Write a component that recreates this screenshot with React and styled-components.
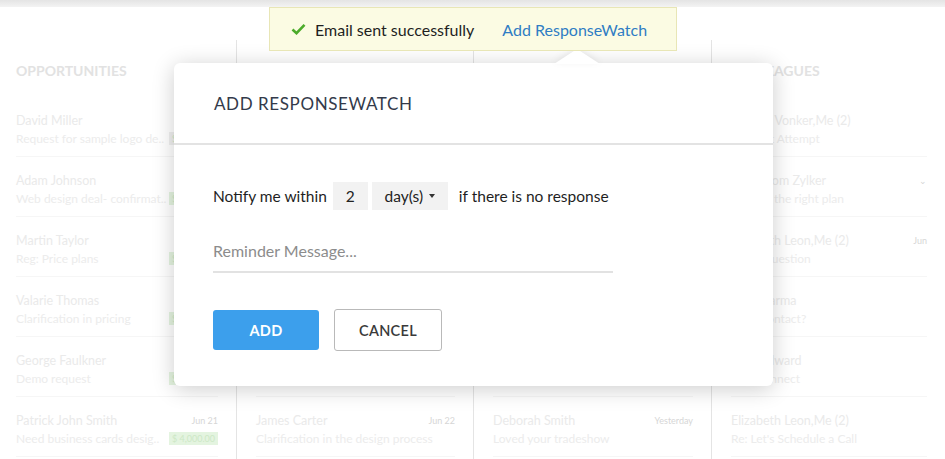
import React from "react";
import styled, { createGlobalStyle } from "styled-components";

const GlobalStyle = createGlobalStyle`
  body {
    margin: 0;
    background: #ffffff;
    font-family: Lato, "Open Sans", sans-serif;
  }
`;

const Page = styled.div`
  position: relative;
  width: 945px;
  height: 459px;
  overflow: hidden;
  background: #ffffff;
`;

const TopStrip = styled.div`
  height: 7px;
  background: linear-gradient(#e4e4e4, #f3f3f3);
`;

const Board = styled.div`
  display: grid;
  grid-template-columns: 236px 237px 238px 234px;
  margin-top: 33px;
  height: 419px;
`;

const Column = styled.div`
  border-left: ${(p) => (p.$first ? "none" : "1px solid #e4e4e4")};
  padding: 0 18px 0 ${(p) => (p.$first ? "16px" : "19px")};
  overflow: hidden;
`;

const ColumnTitle = styled.div`
  margin-top: 21px;
  line-height: 20px;
  font-size: 14px;
  font-weight: 700;
  color: #e2e2e2;
  text-transform: uppercase;
`;

const RowList = styled.div`
  margin-top: 16px;
`;

const Row = styled.div`
  display: grid;
  padding: 14px 0 9px;
  border-bottom: 1px solid #f6f6f6;
  height: 36px;
`;

const Line = styled.div`
  display: flex;
  align-items: center;
  justify-content: space-between;
  height: 18px;
  white-space: nowrap;
`;

const Name = styled.span`
  font-size: 12.5px;
  color: #eaeaea;
`;

const Subject = styled.span`
  font-size: 12px;
  color: #ececec;
`;

const DateText = styled.span`
  font-size: 9px;
  color: #d6d6d6;
`;

const Badge = styled.span`
  min-width: 42px;
  font-size: 9px;
  line-height: 13px;
  padding: 0 3px;
  background: ${(p) => (p.$gray ? "#efefef" : "#e4f4e0")};
  color: #cde8c6;
`;

const Toast = styled.div`
  position: absolute;
  left: 269px;
  top: 7px;
  width: 408px;
  height: 44px;
  box-sizing: border-box;
  display: flex;
  align-items: center;
  padding-left: 21px;
  background: #fbfbe3;
  border: 1px solid #e8e6b6;
  z-index: 3;
  font-size: 16px;
`;

const ToastText = styled.span`
  margin-left: 9px;
  color: #1f1f1f;
`;

const ToastLink = styled.span`
  margin-left: 28px;
  color: #2f7dc4;
`;

const Pointer = styled.div`
  position: absolute;
  left: 554px;
  top: 49px;
  width: 0;
  height: 0;
  border-left: 23px solid transparent;
  border-right: 23px solid transparent;
  border-bottom: 15px solid #ffffff;
  filter: drop-shadow(0 -2px 3px rgba(0, 0, 0, 0.08));
  z-index: 2;
`;

const Modal = styled.div`
  position: absolute;
  left: 174px;
  top: 63px;
  width: 599px;
  height: 323px;
  background: #ffffff;
  border-radius: 6px;
  box-shadow: 0 3px 22px rgba(0, 0, 0, 0.2);
  z-index: 1;
`;

const ModalHeader = styled.div`
  height: 80px;
  display: flex;
  align-items: center;
  padding-left: 40px;
  border-bottom: 2px solid #e3e3e3;
  font-size: 17px;
  letter-spacing: 0.6px;
  color: #333a4a;
`;

const ModalBody = styled.div`
  padding: 37px 39px 0;
`;

const NotifyRow = styled.div`
  display: flex;
  align-items: center;
  font-size: 15.5px;
  color: #1f1f1f;
`;

const FieldBox = styled.div`
  height: 28px;
  width: ${(p) => p.$w}px;
  margin-left: ${(p) => p.$ml}px;
  display: flex;
  align-items: center;
  justify-content: center;
  background: #f2f2f2;
  color: #222222;
`;

const Caret = styled.span`
  margin-left: 6px;
  border-left: 3.5px solid transparent;
  border-right: 3.5px solid transparent;
  border-top: 4px solid #333333;
`;

const AfterText = styled.span`
  margin-left: 11px;
`;

const ReminderInput = styled.div`
  width: 400px;
  height: 42px;
  margin-top: 19px;
  display: flex;
  align-items: center;
  border-bottom: 2px solid #e2e2e2;
  font-size: 16px;
  color: #8c8c8c;
`;

const Actions = styled.div`
  display: flex;
  align-items: center;
  gap: 15px;
  margin-top: 36px;
`;

const Button = styled.button`
  height: ${(p) => (p.$primary ? 40 : 42)}px;
  width: ${(p) => (p.$primary ? 106 : 108)}px;
  border-radius: 3px;
  border: ${(p) => (p.$primary ? "none" : "1px solid #b9b9b9")};
  background: ${(p) => (p.$primary ? "#3c9fec" : "#ffffff")};
  color: ${(p) => (p.$primary ? "#ffffff" : "#3a3a3a")};
  font-family: Lato, sans-serif;
  font-size: 14.5px;
  font-weight: ${(p) => (p.$primary ? 700 : 600)};
  letter-spacing: 0.3px;
  padding: 0;
`;

// rows hidden behind the dialog carry no text
const blank = {};

const columns = [
  {
    title: "Opportunities",
    rows: [
      { name: "David Miller", subject: "Request for sample logo de..", badge: "$ 1,200.00", gray: true },
      { name: "Adam Johnson", subject: "Web design deal- confirmat..", badge: "$ 2,500.00" },
      { name: "Martin Taylor", subject: "Reg: Price plans", badge: "$ 1,800.00" },
      { name: "Valarie Thomas", subject: "Clarification in pricing", badge: "$ 3,000.00" },
      { name: "George Faulkner", subject: "Demo request", badge: "$ 5,000.00" },
      { name: "Patrick John Smith", subject: "Need business cards desig..", badge: "$ 4,000.00", date: "Jun 21" },
    ],
  },
  {
    title: "Follow ups",
    rows: [blank, blank, blank, blank, blank,
      { name: "James Carter", subject: "Clarification in the design process", date: "Jun 22" },
    ],
  },
  {
    title: "Leads",
    rows: [blank, blank, blank, blank, blank,
      { name: "Deborah Smith", subject: "Loved your tradeshow", date: "Yesterday" },
    ],
  },
  {
    title: "Colleagues",
    rows: [
      { name: "Patricia Vonker,Me (2)", subject: "Re: First Attempt" },
      { name: "Offer from Zylker", subject: "Choose the right plan", date: "⌄" },
      { name: "Elizabeth Leon,Me (2)", subject: "Quick question", date: "Jun" },
      { name: "Anil Sharma", subject: "Right contact?" },
      { name: "John Edward", subject: "Let's connect" },
      { name: "Elizabeth Leon,Me (2)", subject: "Re: Let's Schedule a Call" },
    ],
  },
];

const CheckIcon = () => (
  <svg width="15" height="12" viewBox="0 0 15 12">
    <path d="M1.5 6.5 L5.5 10.2 L13.5 1.8" fill="none" stroke="#4cab2a" strokeWidth="2.6" />
  </svg>
);

const App = () => {
  return (
    <Page>
      <GlobalStyle />
      <TopStrip />
      <Board>
        {columns.map((col, i) => (
          <Column key={col.title} $first={i === 0}>
            <ColumnTitle>{col.title}</ColumnTitle>
            <RowList>
              {col.rows.map((r, j) => (
                <Row key={j}>
                  <Line>
                    <Name>{r.name}</Name>
                    {r.date && <DateText>{r.date}</DateText>}
                  </Line>
                  <Line>
                    <Subject>{r.subject}</Subject>
                    {r.badge && <Badge $gray={r.gray}>{r.badge}</Badge>}
                  </Line>
                </Row>
              ))}
            </RowList>
          </Column>
        ))}
      </Board>

      <Toast>
        <CheckIcon />
        <ToastText>Email sent successfully</ToastText>
        <ToastLink>Add ResponseWatch</ToastLink>
      </Toast>
      <Pointer />

      <Modal>
        <ModalHeader>ADD RESPONSEWATCH</ModalHeader>
        <ModalBody>
          <NotifyRow>
            <span>Notify me within</span>
            <FieldBox $w={35} $ml={6}>2</FieldBox>
            <FieldBox $w={76} $ml={4}>
              day(s)
              <Caret />
            </FieldBox>
            <AfterText>if there is no response</AfterText>
          </NotifyRow>
          <ReminderInput>Reminder Message...</ReminderInput>
          <Actions>
            <Button $primary>ADD</Button>
            <Button>CANCEL</Button>
          </Actions>
        </ModalBody>
      </Modal>
    </Page>
  );
};

export default App;
